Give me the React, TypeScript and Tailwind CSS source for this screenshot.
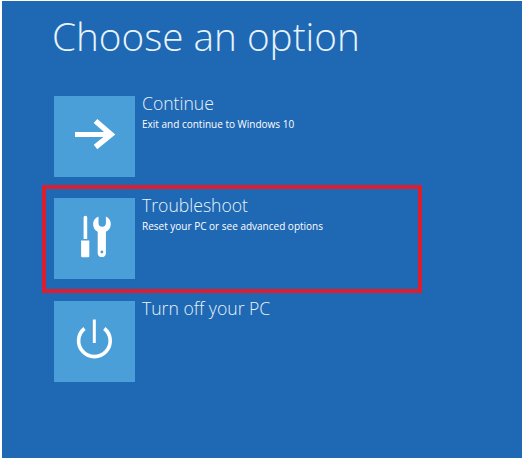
import React from "react";

const Arrow = () => (
  <svg width="81" height="80" viewBox="0 0 81 80" fill="none" stroke="white">
    <path d="M21 38.5H57" strokeWidth="5" />
    <path d="M41.5 25L57 38.5L41.5 51" strokeWidth="5.5" />
  </svg>
);

const Tools = () => (
  <svg width="81" height="81" viewBox="0 0 81 81" fill="white">
    <path d="M29.6 19.5a1.8 1.8 0 0 1 3.6 0V41h-3.6z" />
    <path d="M27.1 42.5h8.2V58a1.2 1.2 0 0 1-1.2 1.2h-5.8a1.2 1.2 0 0 1-1.2-1.2z" />
    <path
      fillRule="evenodd"
      d="M44.5 18.5V25a3.7 3.7 0 0 0 7.4 0v-6.5c3 1.3 4.9 4.2 4.9 7.5 0 3.6-2 6.5-4.9 7.7V55a4.1 4.1 0 0 1-8.2 0V33.7c-2.9-1.2-4.6-4.1-4.6-7.7 0-3.3 2-6.2 5.4-7.5zM47.9 52.6a1.4 1.4 0 1 0 0 2.8a1.4 1.4 0 0 0 0-2.8z"
    />
  </svg>
);

const Power = () => (
  <svg width="81" height="81" viewBox="0 0 81 81" fill="none" stroke="white">
    <path d="M30.5 27.5a15.8 15.8 0 1 0 19.8 0" strokeWidth="3.6" />
    <path d="M40.3 18.5V42" strokeWidth="3" />
  </svg>
);

function Row({
  icon,
  title,
  sub,
  className,
  children,
}: {
  icon: React.ReactNode;
  title: string;
  sub?: string;
  className: string;
  children?: React.ReactNode;
}) {
  return (
    <div className={`relative flex ${className}`}>
      <div className="h-[81px] w-[81px] shrink-0 bg-[#4b9fd9]">{icon}</div>
      <div className="ml-[7px] text-[#e8f3fa]">
        <div className="mt-[-5px] text-[17.6px] leading-[24px] font-light">{title}</div>
        {sub && <div className="mt-[3px] text-[10px] leading-[13px] text-white">{sub}</div>}
      </div>
      {children}
    </div>
  );
}

export default function App() {
  return (
    <div className="h-[458px] w-[522px] overflow-hidden bg-white pt-px pl-[2px] font-['Open_Sans',sans-serif]">
      <div className="h-[457px] bg-[#1f68b4] pl-[52px]">
        <h1 className="ml-[-2px] pt-[9px] text-[38.7px] leading-[53px] font-light text-[#e8f3fa]">Choose an option</h1>
        <Row className="mt-[33px]" icon={<Arrow />} title="Continue" sub="Exit and continue to Windows 10" />
        <Row className="mt-[21px]" icon={<Tools />} title="Troubleshoot" sub="Reset your PC or see advanced options">
          <div className="absolute top-[-13px] left-[-12px] h-[108px] w-[380px] border-4 border-[#dc1f30]" />
        </Row>
        <Row className="mt-[22px]" icon={<Power />} title="Turn off your PC" />
      </div>
    </div>
  );
}
